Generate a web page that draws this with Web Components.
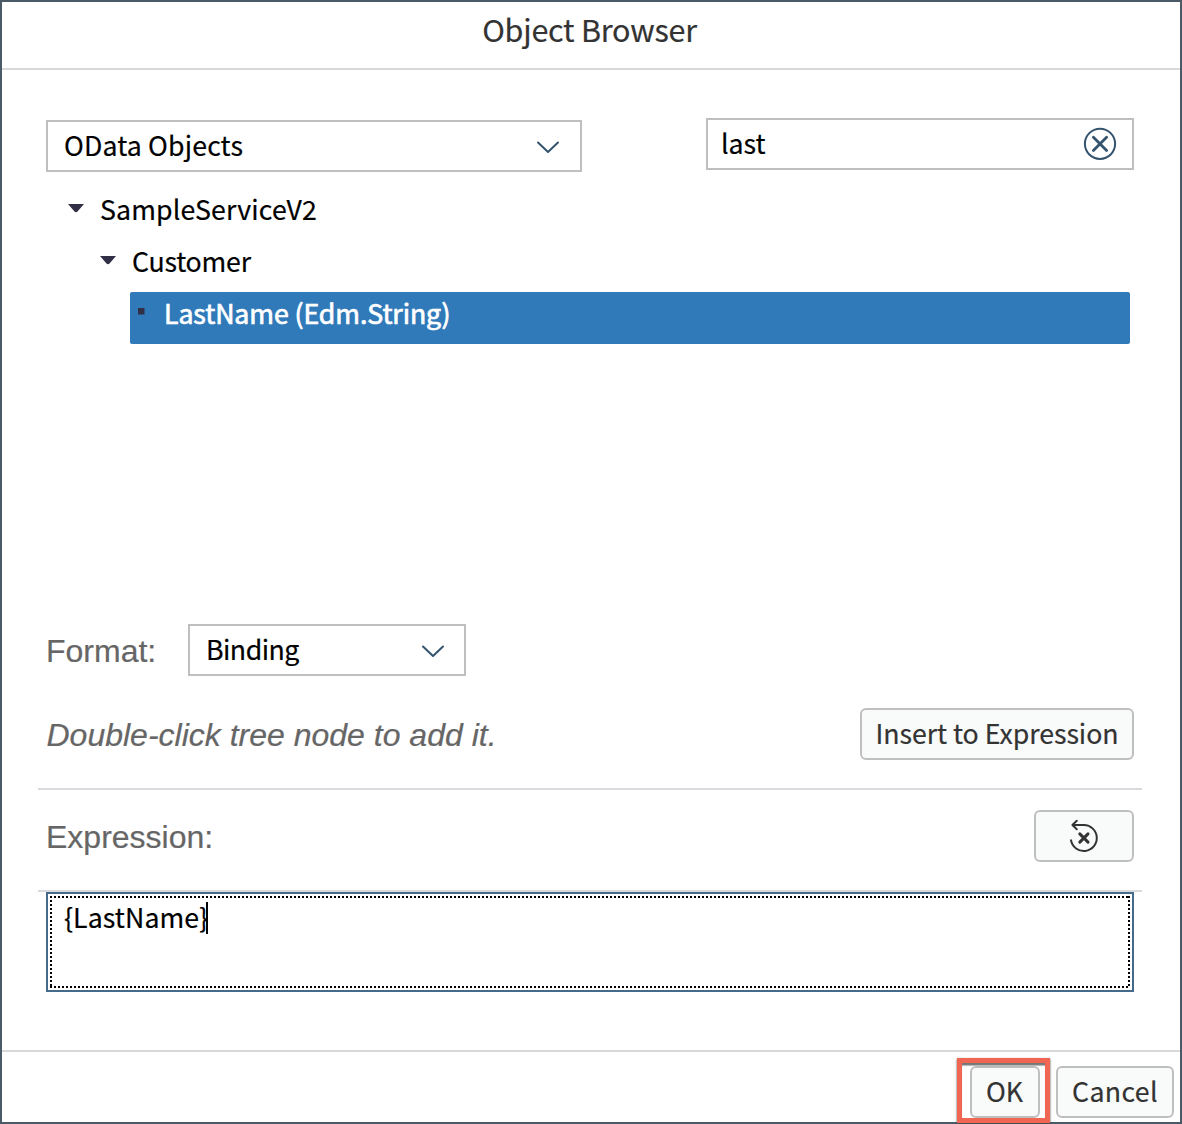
<!DOCTYPE html>
<html lang="en">
<head>
<meta charset="utf-8">
<title>Object Browser</title>
<style>
html,body{margin:0;height:1124px;overflow:hidden;background:#fff}
body{font-family:"Noto Sans CJK SC","Noto Sans",sans-serif;font-size:26.7px;color:#000}
</style>
</head>
<body>
<object-browser></object-browser>
<script>
const define=(name,html)=>customElements.define(name,class extends HTMLElement{
  connectedCallback(){
    if(this.shadowRoot)return;
    const t=document.createElement('template');t.innerHTML=html;
    this.attachShadow({mode:'open'}).append(t.content.cloneNode(true));
  }
});
define('ob-text',`<style>:host{display:block;white-space:pre;line-height:40px;height:40px;-webkit-text-stroke:var(--weight,.2px) currentColor}</style><slot></slot>`);
define('ob-select',`<style>
:host{display:flex;box-sizing:border-box;height:52px;border:2px solid #bfbfbf;align-items:flex-start;justify-content:space-between;padding:3px 20px 0 16px;background:#fff}
svg{display:block;margin-top:16px}</style>
<slot></slot><svg width="24" height="14" viewBox="0 0 24 14"><path d="M2 1.500 12 11 22 1.500" fill="none" stroke="#34536f" stroke-width="2" stroke-linecap="round" stroke-linejoin="round"/></svg>`);
define('ob-search',`<style>
:host{display:flex;box-sizing:border-box;height:52px;border:2px solid #bfbfbf;align-items:flex-start;justify-content:space-between;padding:3px 15px 0 13px;background:#fff}
svg{display:block;margin-top:4px}</style>
<slot></slot><svg width="34" height="34" viewBox="0 0 34 34" fill="none" stroke="#34536f"><circle cx="17" cy="16.800" r="15.1" stroke-width="2"/><path d="M10.4 10.200 23.6 23.400M23.6 10.200 10.4 23.400" stroke-width="2.8" stroke-linecap="round"/></svg>`);
define('ob-button',`<style>
:host{display:flex;box-sizing:border-box;height:52px;border:2px solid #bfbfbf;border-radius:6px;background:#f9fafa;color:#333;justify-content:center;padding-top:3px}</style><slot></slot>`);
define('ob-node',`<style>
:host{display:flex;height:52px;box-sizing:border-box;padding-top:1px}
:host([selected]){background:#307aba;color:#fff;border-radius:2px;--weight:.7px}
.m{width:34px;flex:none}</style><div class="m"><slot name="mark"></slot></div><slot></slot>`);
define('ob-rule',`<style>:host{display:block;height:2px;background:#d9d9de}</style>`);
define('ob-label',`<style>:host{display:block;white-space:pre;font:32px/40px "Liberation Sans",Arial,sans-serif;color:#666;-webkit-text-stroke:.2px #666}</style><slot></slot>`);
define('ob-textarea',`<style>
:host{display:block;box-sizing:border-box;height:100px;border:2px solid #466a8b;padding:2px;background:#fff}
.f{box-sizing:border-box;height:92px;padding:1px 0 0 14px;display:flex;align-items:flex-start;
background:
repeating-linear-gradient(90deg,#000 0 2px,transparent 2px 4px) 0 0/100% 2px no-repeat,
repeating-linear-gradient(90deg,#000 0 2px,transparent 2px 4px) 0 100%/100% 2px no-repeat,
repeating-linear-gradient(180deg,#000 0 2px,transparent 2px 4px) 0 0/2px 100% no-repeat,
repeating-linear-gradient(180deg,#000 0 2px,transparent 2px 4px) 100% 0/2px 100% no-repeat}
i{width:2px;height:32px;background:#000;margin:5px 0 0 -2px}</style><div class="f"><slot></slot><i></i></div>`);
define('ob-callout',`<style>
:host{display:block;box-sizing:border-box;position:absolute;left:-15px;top:-10px;width:93px;height:65px;border:5px solid #f06653;box-shadow:inset 0 3px 1px -.5px #777,0 1px 2px #444}</style>`);
define('object-browser',`<style>
:host{display:flex;flex-direction:column;box-sizing:border-box;width:1182px;height:1124px;border:2px solid #4a5a67;background:#fff}
header{height:66px;border-bottom:2px solid #d9d9d9;display:flex;justify-content:center;font-size:30.5px;color:#333}
header ob-text{margin:7px 3px 0 0;letter-spacing:-.22px}
main{height:980px;box-sizing:border-box;padding:0 38px 0 36px}
.in{padding:0 8px}
.row{display:flex;justify-content:space-between;align-items:flex-start}
.top{padding-top:48px}
.top ob-select{width:536px;margin-top:2px}.top ob-search{width:428px}
.tree{margin-top:16px;height:436px}
.tree svg{display:block}
.n1{margin-left:20px}.n2{margin-left:52px}.n3{margin:0 4px 0 84px}
.fmt ob-select{width:278px;padding-right:19px}.fmt{justify-content:flex-start}
.fmt ob-label{width:142px}
ob-label{margin-top:7px}
.hint{margin-top:32px;margin-bottom:28px}
.hint ob-label{font-style:italic;margin-left:.5px}
.exp{margin:20px 0 28px}
.exp svg{margin-top:3px}
footer{border-top:2px solid #d9d9d9;height:70px;box-sizing:border-box;display:flex;justify-content:flex-end;gap:16px;padding:14px 6px 0 0}
.ok{position:relative;width:70px}
.ok ob-text{margin-right:1px}
</style>
<header><ob-text>Object Browser</ob-text></header>
<main>
<div class="in row top"><ob-select><ob-text style="letter-spacing:.15px">OData Objects</ob-text></ob-select><ob-search><ob-text>last</ob-text></ob-search></div>
<div class="in"><div class="tree">
<ob-node class="n1"><svg slot="mark" width="34" height="51"><path d="M2 15H18L11.5 22.6Q10 24 8.500 22.600Z" fill="#302f45"/></svg><ob-text style="letter-spacing:.16px">SampleServiceV2</ob-text></ob-node>
<ob-node class="n2"><svg slot="mark" width="34" height="51"><path d="M2 15H18L11.5 22.6Q10 24 8.500 22.600Z" fill="#302f45"/></svg><ob-text style="letter-spacing:-.22px">Customer</ob-text></ob-node>
<ob-node class="n3" selected><svg slot="mark" width="34" height="51"><rect x="8" y="15" width="6.500" height="6.500" fill="#302f45"/></svg><ob-text style="letter-spacing:-.08px">LastName (Edm.String)</ob-text></ob-node>
</div>
<div class="row fmt"><ob-label>Format:</ob-label><ob-select><ob-text style="letter-spacing:-.5px">Binding</ob-text></ob-select></div>
<div class="row hint"><ob-label>Double-click tree node to add it.</ob-label><ob-button style="width:274px"><ob-text style="letter-spacing:-.04px">Insert to Expression</ob-text></ob-button></div>
</div>
<ob-rule></ob-rule>
<div class="in row exp"><ob-label>Expression:</ob-label><ob-button style="width:100px"><svg width="32" height="36" viewBox="0 0 32 36" fill="none" stroke="#333" stroke-width="2" stroke-linecap="round" stroke-linejoin="round"><path d="M8.800 2.800 4.400 7 8.800 11.200M4.400 7H15.900A13 13 0 1 1 3 22.300"/><path d="M11.800 15.900 20 24.100M20 15.900 11.800 24.100" stroke-width="3"/></svg></ob-button></div>
<ob-rule></ob-rule>
<div class="in"><ob-textarea><ob-text style="letter-spacing:.1px">{LastName}</ob-text></ob-textarea></div>
</main>
<footer><ob-button class="ok"><ob-text>OK</ob-text><ob-callout></ob-callout></ob-button><ob-button style="width:118px"><ob-text style="letter-spacing:.4px">Cancel</ob-text></ob-button></footer>`);
</script>
</body>
</html>
